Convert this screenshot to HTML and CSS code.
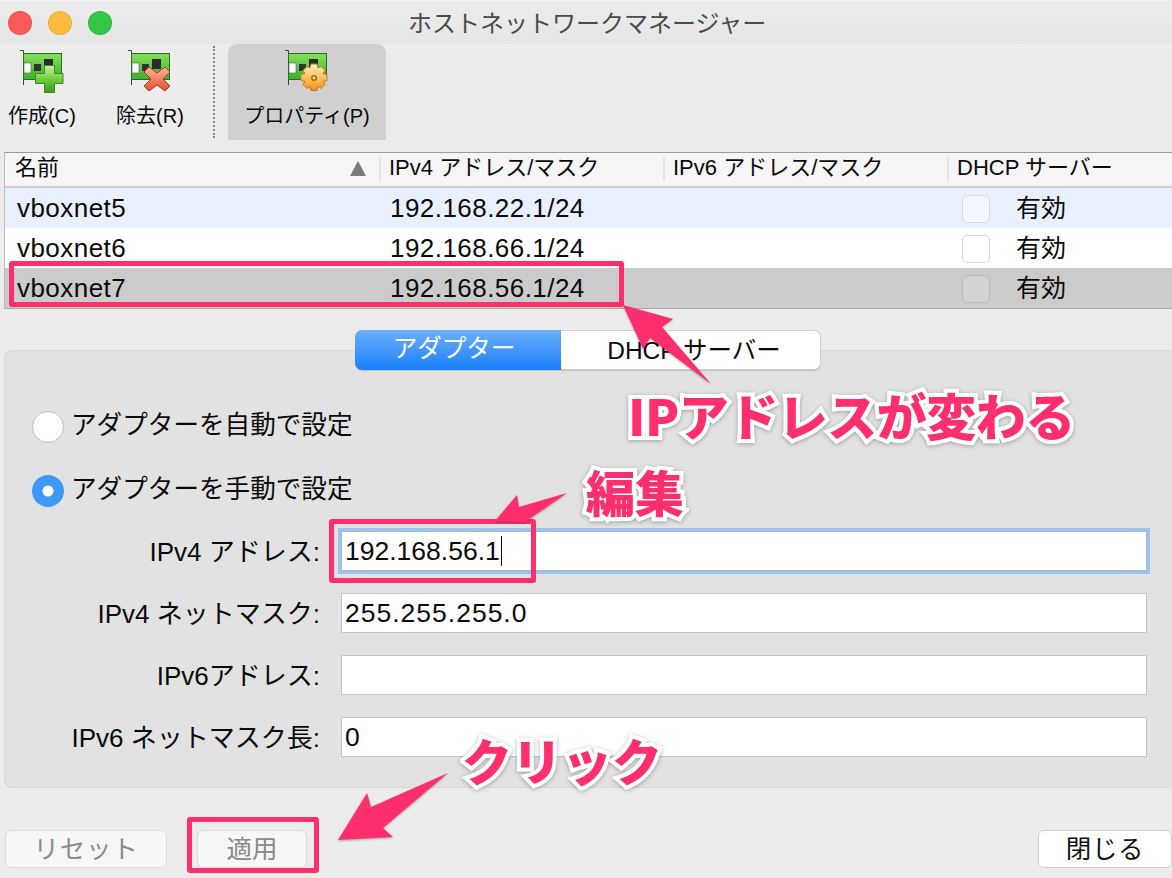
FILE: index.html
```html
<!DOCTYPE html>
<html lang="ja">
<head>
<meta charset="utf-8">
<title>ホストネットワークマネージャー</title>
<link rel="stylesheet" href="styles.css">
</head>
<body>
<svg class="defs" width="0" height="0" aria-hidden="true">
  <defs>
    <linearGradient id="board" x1="0" y1="0" x2="0" y2="1"><stop offset="0" stop-color="#86e05a"/><stop offset="1" stop-color="#3fae30"/></linearGradient>
    <linearGradient id="plus" x1="0" y1="0" x2="0" y2="1"><stop offset="0" stop-color="#c9f0a8"/><stop offset=".5" stop-color="#72cc3e"/><stop offset="1" stop-color="#3d9a22"/></linearGradient>
    <linearGradient id="cross" x1="0" y1="0" x2="0" y2="1"><stop offset="0" stop-color="#fbb79c"/><stop offset="1" stop-color="#e2512c"/></linearGradient>
    <linearGradient id="gear" x1="0" y1="0" x2="0" y2="1"><stop offset="0" stop-color="#fff0c4"/><stop offset=".55" stop-color="#fbbe55"/><stop offset="1" stop-color="#ec8f1c"/></linearGradient>
    <symbol id="nic" viewBox="0 0 48 44">
      <path d="M0 .5h3.500V35" fill="none" stroke="#444" stroke-width="1"/>
      <rect x="3.500" y="3.500" width="38" height="26" fill="url(#board)" stroke="#22701a"/>
      <rect x="4" y="13" width="7" height="10" fill="#fff" stroke="#555" stroke-width=".6"/>
      <rect x="14" y="14" width="7" height="7" fill="#333"/>
      <rect x="24" y="9" width="9" height="10" fill="#2c2c2c"/>
    </symbol>
  </defs>
</svg>

<header class="titlebar">
  <div class="lights">
    <span class="light light-red"></span>
    <span class="light light-yellow"></span>
    <span class="light light-green"></span>
  </div>
  <h1 class="title">ホストネットワークマネージャー</h1>
</header>

<nav class="toolbar">
  <div class="tool tool-create">
    <svg class="tool-icon" viewBox="0 0 48 44"><use href="#nic"/><path class="badge-plus" d="M24.500 15.500v8h-9v10h9v9h10v-9h8.500v-10h-8.500v-8z"/></svg>
    <span class="tool-label">作成(C)</span>
  </div>
  <div class="tool tool-remove">
    <svg class="tool-icon" viewBox="0 0 48 44"><use href="#nic"/><path class="badge-cross" d="M21 17l8 6 8-6 5 5-7 7 7 7-5 5-8-6-8 6-5-5 7-7-7-7z"/></svg>
    <span class="tool-label">除去(R)</span>
  </div>
  <span class="tool-sep"></span>
  <div class="tool tool-props">
    <svg class="tool-icon" viewBox="0 0 48 44"><use href="#nic"/><path class="badge-gear" d="M26 14h6l1 4 3-1.500 4 4-2 3 4 1v6l-4 1 2 3-4 4-3-2-1 4h-6l-1-4-3 2-4-4 2-3-4-1v-6l4-1-2-3 4-4 3 1.500z"/><circle cx="29" cy="28" r="3" fill="#a8690f"/><circle cx="29" cy="28" r="1.400" fill="#f7dc9c"/></svg>
    <span class="tool-label">プロパティ(P)</span>
  </div>
</nav>

<section class="table">
  <div class="thead">
    <div class="th th-name">名前<span class="sort"></span></div>
    <div class="th">IPv4 アドレス/マスク</div>
    <div class="th">IPv6 アドレス/マスク</div>
    <div class="th">DHCP サーバー</div>
  </div>
  <div class="tr tr-alt">
    <div class="td">vboxnet5</div>
    <div class="td">192.168.22.1/24</div>
    <div class="td"></div>
    <div class="td td-check"><span class="check"></span><span class="check-text">有効</span></div>
  </div>
  <div class="tr">
    <div class="td">vboxnet6</div>
    <div class="td">192.168.66.1/24</div>
    <div class="td"></div>
    <div class="td td-check"><span class="check"></span><span class="check-text">有効</span></div>
  </div>
  <div class="tr tr-selected">
    <div class="td">vboxnet7</div>
    <div class="td">192.168.56.1/24</div>
    <div class="td"></div>
    <div class="td td-check"><span class="check"></span><span class="check-text">有効</span></div>
  </div>
</section>

<main class="details">
  <div class="tabs">
    <span class="tab tab-active">アダプター</span>
    <span class="tab">DHCP サーバー</span>
  </div>
  <div class="panel">
    <div class="radio-row"><span class="radio"></span><span class="radio-text">アダプターを自動で設定</span></div>
    <div class="radio-row"><span class="radio radio-on"></span><span class="radio-text">アダプターを手動で設定</span></div>
    <div class="form">
      <label class="form-label">IPv4 アドレス:</label>
      <div class="field field-focus">192.168.56.1<span class="caret"></span></div>
      <label class="form-label">IPv4 ネットマスク:</label>
      <div class="field field-mask">255.255.255.0</div>
      <label class="form-label">IPv6アドレス:</label>
      <div class="field"></div>
      <label class="form-label">IPv6 ネットマスク長:</label>
      <div class="field">0</div>
    </div>
  </div>
</main>

<footer class="footer">
  <span class="btn btn-reset">リセット</span>
  <span class="btn btn-apply">適用</span>
  <span class="btn btn-close">閉じる</span>
</footer>

<div class="mark mark-row"></div>
<div class="mark mark-field"></div>
<div class="mark mark-apply"></div>
<svg class="arrows" viewBox="0 0 1172 878" aria-hidden="true">
  <path d="M623 305 673 319 662 327 711 384 650 338 643 349z"/>
  <path d="M495 521 517 495 519 507 567 493 525 522z"/>
  <path d="M338 840 367 793 371 807 448 773 383 828 393 837z"/>
</svg>
<div class="note note-ip">IPアドレスが変わる</div>
<div class="note note-edit">編集</div>
<div class="note note-click">クリック</div>
</body>
</html>
```

FILE: styles.css
```css
* { box-sizing: border-box; }
html, body { margin: 0; padding: 0; }
body {
  position: relative;
  width: 1172px;
  height: 878px;
  overflow: hidden;
  background: #ececec;
  color: #0a0a0a;
  font-family: "Liberation Sans", "Noto Sans CJK JP", sans-serif;
  font-size: 24px;
}
.defs { position: absolute; }

.titlebar {
  display: flex;
  align-items: center;
  height: 44px;
  padding-left: 8px;
  background: linear-gradient(#ececec, #e6e6e6);
  border-top: 1px solid #f5f5f5;
}
.lights { display: flex; gap: 16px; }
.light { width: 24px; height: 24px; border-radius: 50%; border: 1px solid rgba(0,0,0,.08); }
.light-red { background: #fc5b57; }
.light-yellow { background: #fdbc40; }
.light-green { background: #33c748; }
.title {
  margin: 0 0 2px 296px;
  font-size: 24px;
  font-weight: 400;
  color: #4a4a4a;
  white-space: nowrap;
}

.toolbar {
  display: flex;
  height: 96px;
  background: #ececec;
}
.tool { display: flex; flex-direction: column; align-items: center; }
.tool-icon { width: 48px; height: 44px; margin: 6px 0 0 4px; overflow: visible; }
.tool-label { margin-top: 9px; font-size: 20px; line-height: 26px; white-space: nowrap; }
.tool-create { width: 84px; }
.tool-remove { width: 84px; margin: 0 21px 0 24px; }
.tool-sep { width: 0; height: 92px; margin-top: 2px; border-left: 2px dotted #888; }
.tool-props { width: 158px; margin-left: 13px; border-radius: 9px 9px 0 0; background: #d0d0d0; }
.badge-plus { fill: url(#plus); stroke: #3c8a1e; stroke-width: 1; }
.badge-cross { fill: url(#cross); stroke: #b23a12; stroke-width: 1; }
.badge-gear { fill: url(#gear); stroke: #c87a18; stroke-width: 1; }

.table {
  margin: 12px 0 0 4px;
  height: 157px;
  background: #fff;
  border-top: 1px solid #9b9b9b;
  border-bottom: 1px solid #aaa;
  border-left: 1px solid #bbb;
}
.thead, .tr { display: grid; grid-template-columns: 374px 284px 284px 1fr; }
.thead { grid-template-rows: 33px; height: 35px; background: #f5f5f5; border-bottom: 2px solid #cfcfcf; }
.th {
  margin: 4px 0 5px;
  padding-left: 8px;
  border-left: 2px solid #e2e2e2;
  font-size: 22px;
  line-height: 22px;
  white-space: nowrap;
}
.th-name { position: relative; padding-left: 10px; border-left: 0; }
.sort {
  position: absolute;
  left: 345px;
  top: 4px;
  border-left: 8px solid transparent;
  border-right: 8px solid transparent;
  border-bottom: 15px solid #7b7b7b;
}
.tr { height: 40px; }
.tr-alt { background: #e9f0fd; }
.tr-selected { background: #cbcbcb; }
.td {
  display: flex;
  align-items: center;
  padding: 0 0 2px 12px;
  font-size: 26px;
  letter-spacing: .45px;
  white-space: nowrap;
}
.td:nth-child(2) { padding-left: 11px; }
.td-check { padding: 0 0 0 15px; font-size: 25px; letter-spacing: 0; }
.check-text { margin-bottom: 6px; }
.check {
  width: 28px;
  height: 28px;
  margin-right: 26px;
  border: 1px solid #d8d8d8;
  border-radius: 5px;
  background: #fff;
}
.tr-alt .check { background: #f2f5fb; }
.tr-selected .check { background: #d2d2d2; border-color: #b8b8b8; }

.details { margin: 21px 0 0 4px; }
.tabs {
  position: relative;
  z-index: 1;
  display: flex;
  justify-content: center;
  height: 40px;
  margin-bottom: -20px;
}
.tab {
  display: flex;
  align-items: center;
  justify-content: center;
  width: 260px;
  padding: 0 0 4px 7px;
  background: #fff;
  border: 1px solid #cfcfcf;
  border-left: 0;
  border-radius: 0 7px 7px 0;
  font-size: 24.500px;
  box-shadow: 0 1px 1px rgba(0,0,0,.15);
}
.tab-active {
  width: 206px;
  padding: 0 8px 8px 0;
  border: 0;
  border-radius: 7px 0 0 7px;
  background: linear-gradient(#6cb0fa, #1a7ffb);
  color: #fff;
}
.panel {
  height: 438px;
  padding: 60px 0 0 27px;
  background: #e2e2e2;
  border: 1px solid #d8d8d8;
  border-right: 0;
  border-radius: 8px 0 0 8px;
}
.radio-row {
  display: flex;
  align-items: center;
  height: 32px;
  margin-bottom: 32px;
  font-size: 25.600px;
  white-space: nowrap;
}
.radio-text { margin-bottom: 9px; }
.radio {
  flex: none;
  width: 32px;
  height: 32px;
  margin-right: 7px;
  border: 1px solid #bdbdbd;
  border-radius: 50%;
  background: #fff;
}
.radio-on {
  border: 0;
  background: radial-gradient(circle, #fff 0 5px, #3f97f8 6px);
}
.form {
  display: grid;
  grid-template-columns: 309px 806px;
  grid-auto-rows: 40px;
  row-gap: 22px;
  column-gap: 21px;
  margin: -8px 0 0 -21px;
}
.form-label {
  display: flex;
  align-items: center;
  justify-content: flex-end;
  padding-bottom: 3px;
  font-size: 26px;
  white-space: nowrap;
}
.field {
  display: flex;
  align-items: center;
  padding-left: 3px;
  background: #fff;
  border: 1px solid #c4c4c4;
  font-size: 26.500px;
  white-space: nowrap;
}
.field-mask { letter-spacing: 1px; }
.field-focus { border-color: #a9b8c9; box-shadow: 0 0 0 3px #9cc3ee; }
.caret { width: 1px; height: 30px; margin-left: 1px; background: #111; }

.footer {
  display: flex;
  align-items: flex-start;
  padding: 42px 0 0 5px;
}
.btn {
  display: flex;
  align-items: center;
  justify-content: center;
  height: 38px;
  padding-bottom: 6px;
  background: #f6f6f6;
  border: 1px solid #dcdcdc;
  border-radius: 6px;
  font-size: 25.500px;
  color: #8a8a8a;
}
.btn-reset { width: 162px; letter-spacing: .8px; }
.btn-apply { width: 110px; margin-left: 30px; }
.btn-close {
  width: 134px;
  margin-left: auto;
  background: #fff;
  border-color: #cfcfcf;
  color: #111;
  letter-spacing: .6px;
}

.mark { position: absolute; z-index: 2; border: 5px solid #fe2f6c; border-radius: 3px; }
.mark-row { left: 9px; top: 261px; width: 615px; height: 46px; }
.mark-field { left: 329px; top: 519px; width: 207px; height: 64px; }
.mark-apply { left: 187px; top: 817px; width: 132px; height: 56px; }
.arrows { position: absolute; z-index: 2; left: 0; top: 0; width: 1172px; height: 878px; }
.arrows path { fill: #fe2f6c; filter: drop-shadow(0 1px 1px rgba(0,0,0,.3)); }

.note {
  position: absolute;
  z-index: 3;
  font-family: "Noto Sans CJK JP", sans-serif;
  font-weight: 900;
  color: #fe2f6c;
  white-space: nowrap;
  -webkit-text-stroke: 8px #fff;
  paint-order: stroke fill;
  filter: drop-shadow(0 1px 2px rgba(0,0,0,.3));
}
.note-ip { left: 628px; top: 379px; font-size: 50px; line-height: 70px; letter-spacing: -.5px; }
.note-edit { left: 586px; top: 455px; font-size: 49px; line-height: 72px; }
.note-click { left: 462px; top: 728px; font-size: 50px; line-height: 62px; }
```
